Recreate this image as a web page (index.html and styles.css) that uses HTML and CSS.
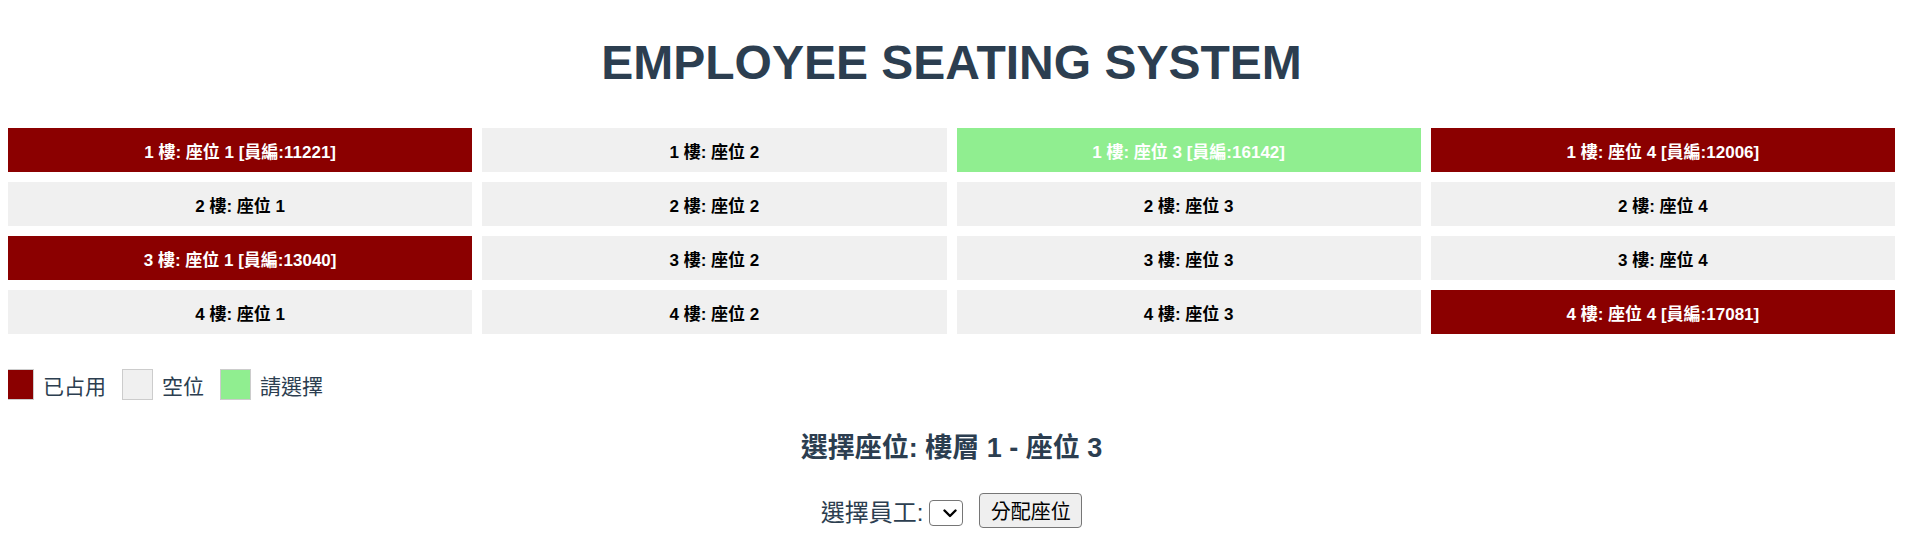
FILE: index.html
```html
<!DOCTYPE html>
<html lang="zh-Hant">
<head>
<meta charset="utf-8">
<title>Employee Seating System</title>
<link rel="stylesheet" href="styles.css">
</head>
<body>
<h1 class="title">EMPLOYEE SEATING SYSTEM</h1>
<div class="grid">
  <div class="cell occupied">1 樓: 座位 1 [員編:11221]</div>
  <div class="cell empty">1 樓: 座位 2</div>
  <div class="cell selected">1 樓: 座位 3 [員編:16142]</div>
  <div class="cell occupied">1 樓: 座位 4 [員編:12006]</div>
  <div class="cell empty">2 樓: 座位 1</div>
  <div class="cell empty">2 樓: 座位 2</div>
  <div class="cell empty">2 樓: 座位 3</div>
  <div class="cell empty">2 樓: 座位 4</div>
  <div class="cell occupied">3 樓: 座位 1 [員編:13040]</div>
  <div class="cell empty">3 樓: 座位 2</div>
  <div class="cell empty">3 樓: 座位 3</div>
  <div class="cell empty">3 樓: 座位 4</div>
  <div class="cell empty">4 樓: 座位 1</div>
  <div class="cell empty">4 樓: 座位 2</div>
  <div class="cell empty">4 樓: 座位 3</div>
  <div class="cell occupied">4 樓: 座位 4 [員編:17081]</div>
</div>
<div class="legend">
  <div class="legend-item"><span class="swatch occupied"></span><span>已占用</span></div>
  <div class="legend-item"><span class="swatch empty"></span><span>空位</span></div>
  <div class="legend-item"><span class="swatch selected"></span><span>請選擇</span></div>
</div>
<h2 class="current">選擇座位: 樓層 1 - 座位 3</h2>
<div class="controls">
  <label class="label" for="emp">選擇員工:</label>
  <span class="select-wrap">
    <select id="emp" class="picker"></select>
    <svg class="chev" width="14" height="9" viewBox="0 0 14 9" aria-hidden="true"><path d="M1.5 1.5 L7 7 L12.5 1.5" fill="none" stroke="#000" stroke-width="2.4" stroke-linecap="round" stroke-linejoin="round"/></svg>
  </span>
  <button class="assign" type="button">分配座位</button>
</div>
</body>
</html>
```
FILE: styles.css
```css
body {
  margin: 0 14px 0 8px;
  font-family: "Liberation Sans", Arial, "Noto Sans CJK TC", sans-serif;
  color: #2c3e50;
  background: #fff;
}
.title {
  font-size: 48px;
  line-height: 55px;
  font-weight: bold;
  text-align: center;
  margin: 0;
  padding: 35px 0 38px;
}
.grid {
  display: grid;
  grid-template-columns: repeat(4, 1fr);
  gap: 10px;
}
.cell {
  height: 44px;
  display: flex;
  align-items: center;
  justify-content: center;
  font-size: 17px;
  font-weight: bold;
}
.occupied { background: #8b0000; color: #fff; }
.empty { background: #f0f0f0; color: #000; }
.selected { background: #90ee90; color: #fff; }
.legend {
  display: flex;
  align-items: center;
  gap: 16px;
  margin: 35px 0 0 -5px;
  font-size: 21px;
}
.legend-item {
  display: flex;
  align-items: center;
}
.swatch {
  flex: none;
  width: 29px;
  height: 29px;
  border: 1px solid #ccc;
  margin-right: 9px;
}
.current {
  font-size: 27px;
  line-height: 36px;
  font-weight: bold;
  text-align: center;
  margin: 30px 0 27px;
}
.controls {
  display: flex;
  justify-content: center;
  align-items: center;
}
.label {
  font-size: 24px;
  margin-right: 6px;
}
.select-wrap {
  position: relative;
  display: flex;
  margin: 4px 16px 0 0;
}
.picker {
  appearance: none;
  -webkit-appearance: none;
  width: 34px;
  height: 26px;
  margin: 0;
  padding: 0;
  border: 1px solid #767676;
  border-radius: 4px;
  background: #fff;
}
.chev {
  position: absolute;
  left: 14px;
  top: 9px;
  pointer-events: none;
}
.assign {
  width: 103px;
  height: 35px;
  font-size: 20px;
  font-family: "Liberation Sans", Arial, "Noto Sans CJK TC", sans-serif;
  padding: 0;
  margin: 0;
  color: #000;
  background: #efefef;
  border: 1px solid #767676;
  border-radius: 4px;
}
```
